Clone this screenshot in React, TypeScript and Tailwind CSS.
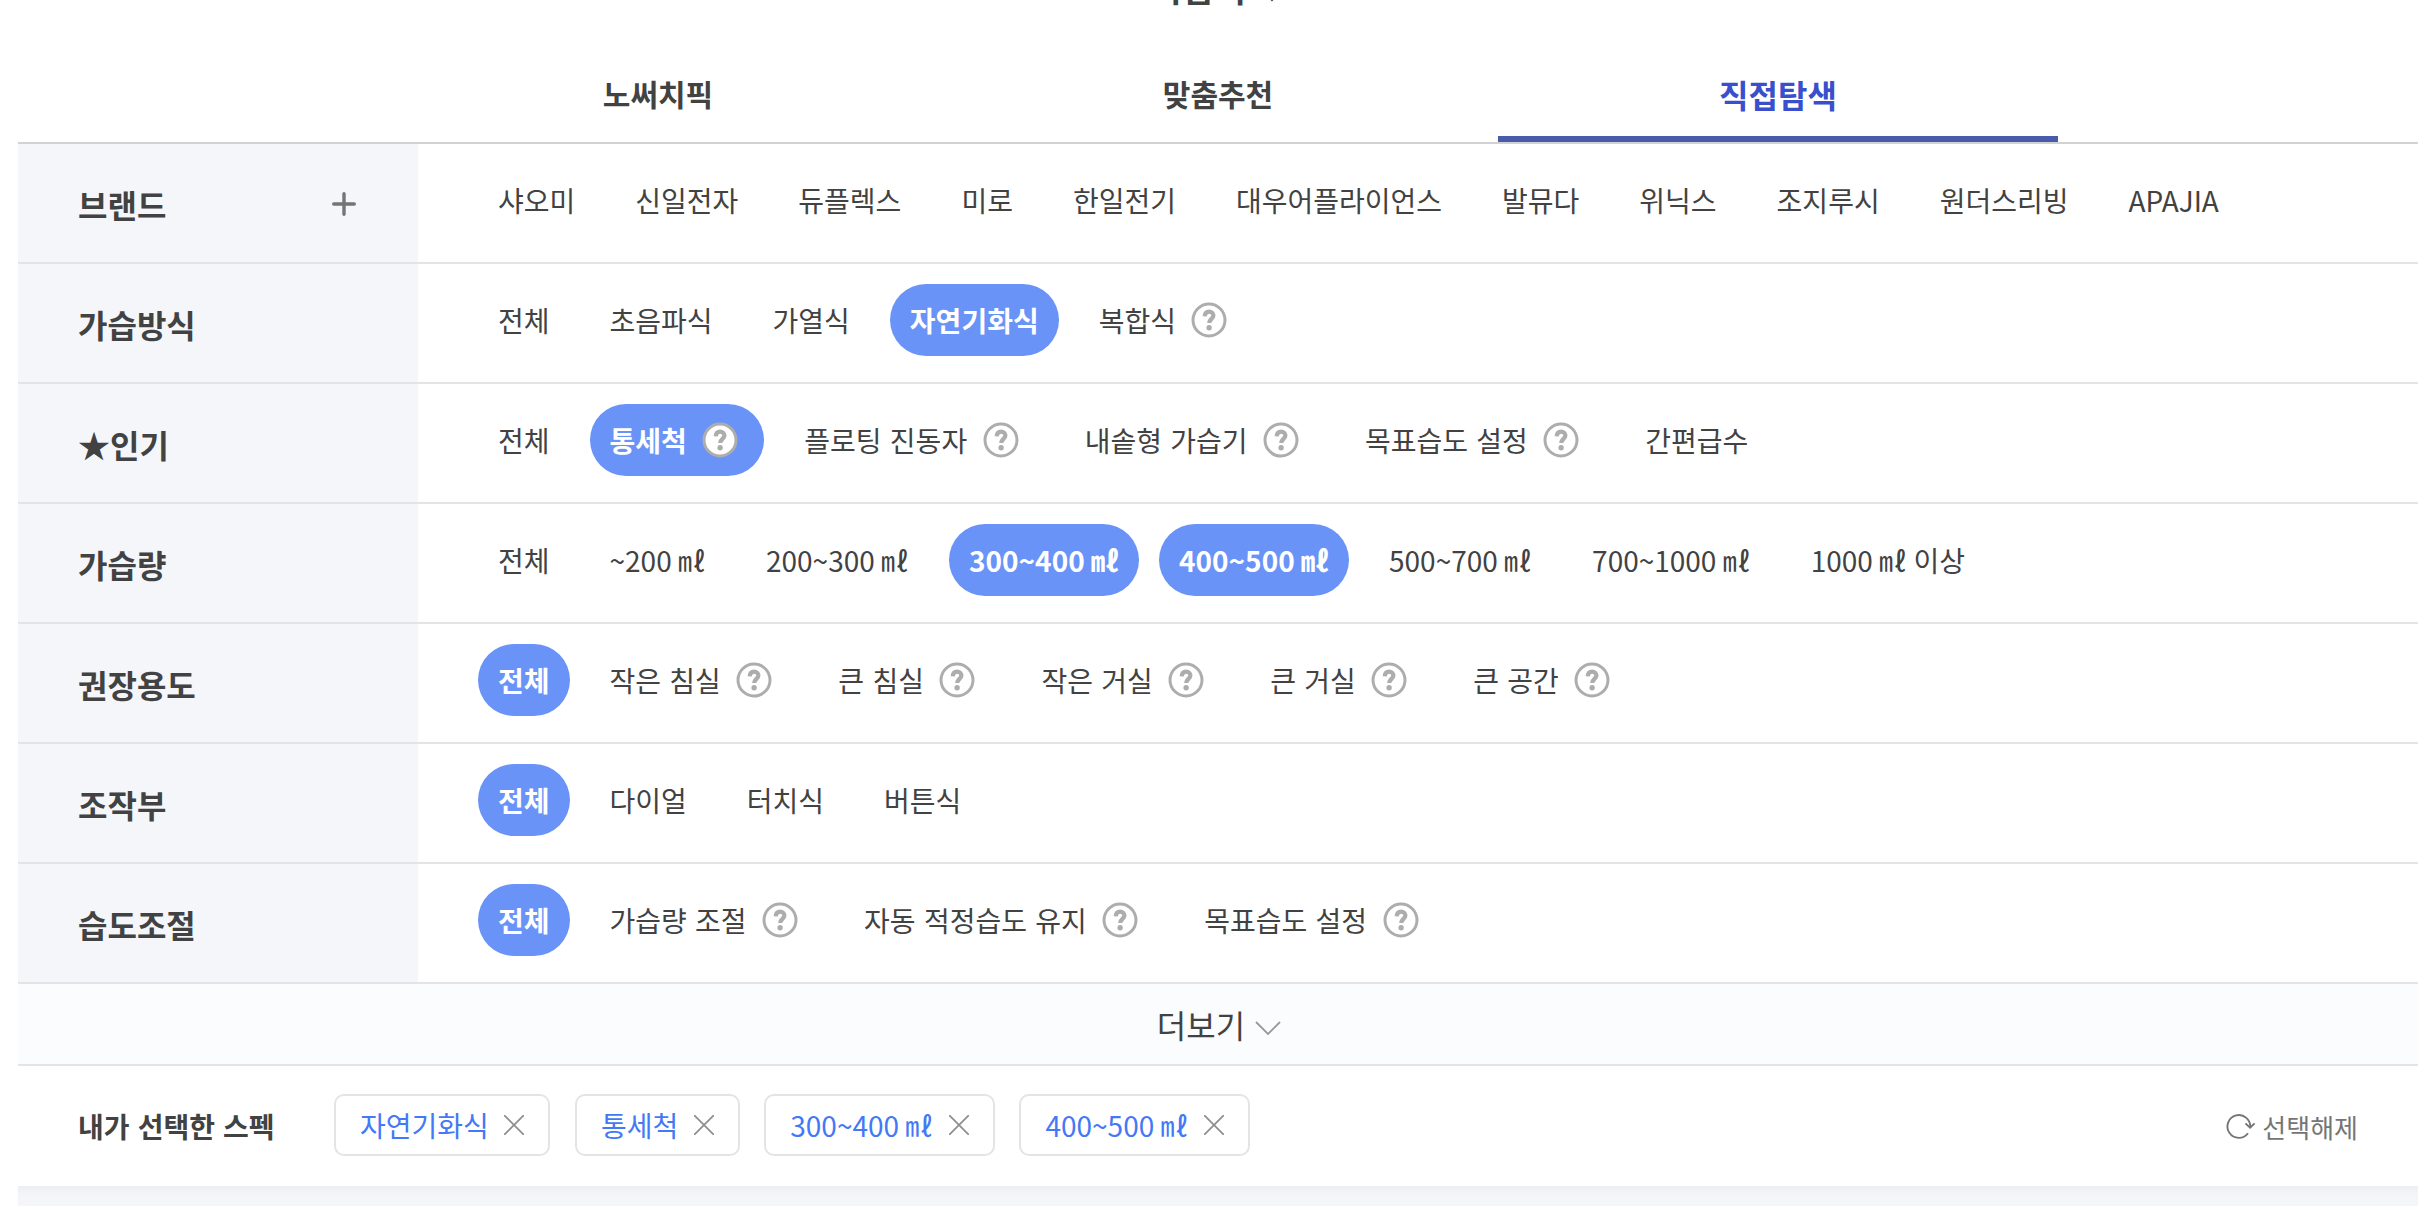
import React, { useState } from 'react';

interface Option {
  name: string;
  help?: boolean;
}

interface Spec {
  title: string;
  expandable?: boolean;
  options: Option[];
}

const tabs = ['노써치픽', '맞춤추천', '직접탐색'];

const specs: Spec[] = [
  {
    title: '브랜드',
    expandable: true,
    options: [
      { name: '샤오미' },
      { name: '신일전자' },
      { name: '듀플렉스' },
      { name: '미로' },
      { name: '한일전기' },
      { name: '대우어플라이언스' },
      { name: '발뮤다' },
      { name: '위닉스' },
      { name: '조지루시' },
      { name: '원더스리빙' },
      { name: 'APAJIA' },
    ],
  },
  {
    title: '가습방식',
    options: [
      { name: '전체' },
      { name: '초음파식' },
      { name: '가열식' },
      { name: '자연기화식' },
      { name: '복합식', help: true },
    ],
  },
  {
    title: '★인기',
    options: [
      { name: '전체' },
      { name: '통세척', help: true },
      { name: '플로팅 진동자', help: true },
      { name: '내솥형 가습기', help: true },
      { name: '목표습도 설정', help: true },
      { name: '간편급수' },
    ],
  },
  {
    title: '가습량',
    options: [
      { name: '전체' },
      { name: '~200 ㎖' },
      { name: '200~300 ㎖' },
      { name: '300~400 ㎖' },
      { name: '400~500 ㎖' },
      { name: '500~700 ㎖' },
      { name: '700~1000 ㎖' },
      { name: '1000 ㎖ 이상' },
    ],
  },
  {
    title: '권장용도',
    options: [
      { name: '전체' },
      { name: '작은 침실', help: true },
      { name: '큰 침실', help: true },
      { name: '작은 거실', help: true },
      { name: '큰 거실', help: true },
      { name: '큰 공간', help: true },
    ],
  },
  {
    title: '조작부',
    options: [{ name: '전체' }, { name: '다이얼' }, { name: '터치식' }, { name: '버튼식' }],
  },
  {
    title: '습도조절',
    options: [
      { name: '전체' },
      { name: '가습량 조절', help: true },
      { name: '자동 적정습도 유지', help: true },
      { name: '목표습도 설정', help: true },
    ],
  },
];

const initialSelected: Record<string, string[]> = {
  가습방식: ['자연기화식'],
  '★인기': ['통세척'],
  가습량: ['300~400 ㎖', '400~500 ㎖'],
};

function HelpIcon() {
  return (
    <svg width="48" height="48" viewBox="0 0 48 48" fill="none" className="ml-[9.5px] shrink-0">
      <circle cx="24" cy="24" r="16" fill="#fff" stroke="#adadad" strokeWidth="3" />
      <path
        d="M19.7 20.3c.2-2.9 1.9-4.6 4.4-4.6s4.3 1.5 4.3 3.9c0 3.1-4.2 3.6-4.2 7.4"
        stroke="#adadad"
        strokeWidth="4.2"
      />
      <circle cx="24.1" cy="31.8" r="2.7" fill="#adadad" />
    </svg>
  );
}

function CloseIcon() {
  return (
    <svg width="20" height="20" viewBox="0 0 20 20" fill="none" stroke="#8f8f8f" strokeWidth="1.8">
      <path d="M0 0l20 20M20 0L0 20" />
    </svg>
  );
}

export default function App() {
  const [tab, setTab] = useState('직접탐색');
  const [selected, setSelected] = useState(initialSelected);

  const toggle = (title: string, name: string) => {
    if (name === '전체') {
      setSelected({ ...selected, [title]: [] });
      return;
    }
    const cur = selected[title] || [];
    setSelected({
      ...selected,
      [title]: cur.includes(name) ? cur.filter((n) => n !== name) : [...cur, name],
    });
  };

  // nothing picked in a row means "전체"
  const isOn = (title: string, name: string) => {
    const cur = selected[title] || [];
    return name === '전체' ? cur.length === 0 : cur.includes(name);
  };

  return (
    <div className="h-[1206px] w-[2430px] overflow-hidden bg-white pl-[18px] font-['Noto_Sans_CJK_KR',sans-serif] text-[28px] text-[#424242]">
      <div className="flex w-[2400px] flex-col">
        {/* Title, scrolled almost out of view */}
        <div className="flex h-[7px] items-end justify-center pr-[2px]">
          <h1 className="flex items-center gap-[16px] text-[34px] leading-[38px] font-bold">
            가습기
            <svg
              width="20"
              height="12"
              viewBox="0 0 20 12"
              fill="none"
              stroke="#424242"
              strokeWidth="2"
              className="mb-[5px] self-end"
            >
              <path d="M1 1l9 9 9-9" />
            </svg>
          </h1>
        </div>

        {/* Tabs */}
        <div className="flex h-[137px] justify-center border-b-2 border-[#d2d2d2]">
          {tabs.map((t) => (
            <button
              key={t}
              onClick={() => setTab(t)}
              className={
                t === tab
                  ? 'flex w-[560px] items-center justify-center border-b-6 border-[#4a5bae] pt-[44px] text-[32px] font-bold text-[#3a4fcb]'
                  : 'flex w-[560px] items-center justify-center pt-[37px] text-[30px] font-bold'
              }
            >
              {t}
            </button>
          ))}
        </div>

        {/* Spec rows */}
        {specs.map((spec) => (
          <div key={spec.title} className="flex h-[120px] border-b-2 border-[#e4e4e4]">
            <div className="flex w-[400px] items-center justify-between bg-[#f4f6fa] pt-[2px] pr-[62px] pl-[60px] text-[32px] font-bold">
              {spec.title}
              {spec.expandable && (
                <svg
                  width="24"
                  height="24"
                  viewBox="0 0 24 24"
                  fill="none"
                  stroke="#757575"
                  strokeWidth="3.4"
                  strokeLinecap="round"
                >
                  <path d="M12 1.7v20.6M1.7 12h20.6" />
                </svg>
              )}
            </div>
            <div className="flex items-start gap-[20px] pt-[20px] pl-[60px]">
              {spec.options.map((o) => (
                <button
                  key={o.name}
                  onClick={() => toggle(spec.title, o.name)}
                  className={
                    isOn(spec.title, o.name)
                      ? 'flex h-[72px] items-center rounded-full bg-[#6a93f8] px-[20px] font-bold whitespace-nowrap text-white'
                      : 'flex h-[72px] items-center px-[20px] whitespace-nowrap'
                  }
                >
                  <span className={o.help ? '[word-spacing:2px]' : ''}>{o.name}</span>
                  {o.help && <HelpIcon />}
                </button>
              ))}
            </div>
          </div>
        ))}

        {/* More */}
        <button className="flex h-[82px] items-center justify-center gap-[10px] border-b-2 border-[#e4e4e4] bg-[#fbfcfe] pl-[2px] text-[32px]">
          더보기
          <svg
            width="26"
            height="14"
            viewBox="0 0 26 14"
            fill="none"
            stroke="#9a9a9a"
            strokeWidth="1.8"
            className="mt-[7px]"
          >
            <path d="M1 1l12 12L25 1" />
          </svg>
        </button>

        {/* Selected specs */}
        <div className="flex h-[120px] items-center pr-[60px] pl-[60px]">
          <h2 className="w-[256px] font-bold [word-spacing:1.8px]">내가 선택한 스펙</h2>
          <div className="flex flex-1 gap-[24.5px] pb-[2px]">
            {specs.flatMap((spec) =>
              (selected[spec.title] || []).map((name) => (
                <button
                  key={spec.title + name}
                  onClick={() => toggle(spec.title, name)}
                  className="flex h-[62px] items-center gap-[15.6px] rounded-[10px] border-2 border-[#e4e4e4] px-[24px] text-[#4378f6]"
                >
                  {name}
                  <CloseIcon />
                </button>
              ))
            )}
          </div>
          <button onClick={() => setSelected({})} className="flex items-center gap-[6px] text-[26px] text-[#757575]">
            <svg width="30" height="26" viewBox="0 0 30 26" fill="none" stroke="#757575" strokeWidth="1.9">
              <path d="M22 20.3A11.4 11.4 0 1 1 24.2 14.6" />
              <path d="M19.4 10.4l4.7 4.4 4.5-4.4" />
            </svg>
            선택해제
          </button>
        </div>

        <div className="h-[20px] bg-[#f4f6fa] shadow-[inset_0_8px_8px_-4px_rgba(0,0,0,0.04)]" />
      </div>
    </div>
  );
}
